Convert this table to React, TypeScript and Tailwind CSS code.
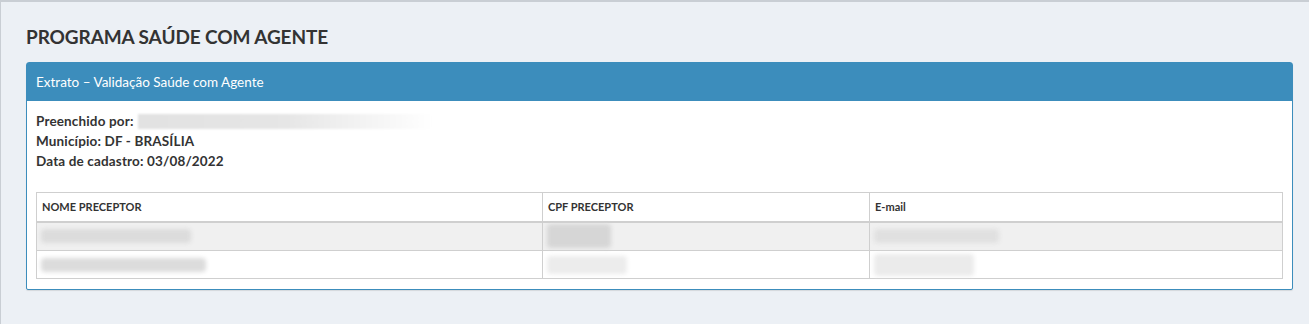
import React from "react"

// blurred placeholder for hidden personal data
function Smudge({ w, h, tone = "bg-[#dcdcdc]" }: { w: string; h: string; tone?: string }) {
    return <div className={`${w} ${h} ${tone} blur-[2px] rounded-sm`} />
}

export default function App() {
    const rows = [
        { nome: "w-[150px]", cpf: "w-[64px]", mail: "w-[125px]", bg: "bg-[#f0f0f0]", h: "h-[29px]" },
        { nome: "w-[165px]", cpf: "w-[80px]", mail: "w-[100px]", bg: "bg-white", h: "h-[28px]" },
    ]

    return (
        <div className="min-h-[324px] w-[1309px] bg-[#ecf0f5] border-t-2 border-l border-[#c9ced4] font-['Lato','Open_Sans',sans-serif] text-[#333]">
            <div className="pl-[25px] pr-[16px] pt-[22px]">
                <h1 className="text-[19px] font-bold text-[#333] leading-[26px] mb-[12px] tracking-[-0.1px]">PROGRAMA SAÚDE COM AGENTE</h1>

                <div className="border border-[#3c8dbc] rounded-t-[3px] rounded-b-[2px] bg-white shadow-[0_1px_1px_rgba(0,0,0,0.1)]">
                    <div className="bg-[#3c8dbc] h-[38px] flex items-center px-[9px] text-[13.5px] text-white">
                        Extrato – Validação Saúde com Agente
                    </div>

                    <div className="px-[9px] pt-[10px] pb-[10px]">
                        <div className="text-[13.5px] font-bold leading-[20px] tracking-[0.15px]">
                            <div className="flex items-center gap-[4px]">
                                Preenchido por:
                                <div className="w-[295px] h-[15px] bg-gradient-to-r from-[#e2e2e2] via-[#e6e6e6] to-white blur-[1px]" />
                            </div>
                            <div>Município: DF - BRASÍLIA</div>
                            <div>Data de cadastro: 03/08/2022</div>
                        </div>

                        <table className="w-full mt-[21px] border-collapse border border-[#cfcfcf] text-[11px]">
                            <thead>
                                <tr className="h-[29px] border-b-2 border-[#cfcfcf]">
                                    <th className="w-[506px] border border-[#cfcfcf] text-left font-bold px-[5px]">NOME PRECEPTOR</th>
                                    <th className="w-[327px] border border-[#cfcfcf] text-left font-bold px-[5px]">CPF PRECEPTOR</th>
                                    <th className="border border-[#cfcfcf] text-left font-bold px-[5px]">E-mail</th>
                                </tr>
                            </thead>
                            <tbody>
                                {rows.map((r, i) => (
                                    <tr key={i} className={`${r.h} ${r.bg}`}>
                                        <td className="border border-[#cfcfcf] px-[4px]">
                                            <Smudge w={r.nome} h="h-[14px]" />
                                        </td>
                                        <td className="border border-[#cfcfcf] px-[4px]">
                                            <Smudge w={r.cpf} h={i === 0 ? "h-[24px]" : "h-[18px]"} tone={i === 0 ? "bg-[#d6d6d6]" : "bg-[#ececec]"} />
                                        </td>
                                        <td className="border border-[#cfcfcf] px-[4px]">
                                            <Smudge w={r.mail} h={i === 0 ? "h-[14px]" : "h-[22px]"} tone={i === 0 ? "bg-[#e0e0e0]" : "bg-[#ebebeb]"} />
                                        </td>
                                    </tr>
                                ))}
                            </tbody>
                        </table>
                    </div>
                </div>
            </div>
        </div>
    )
}
